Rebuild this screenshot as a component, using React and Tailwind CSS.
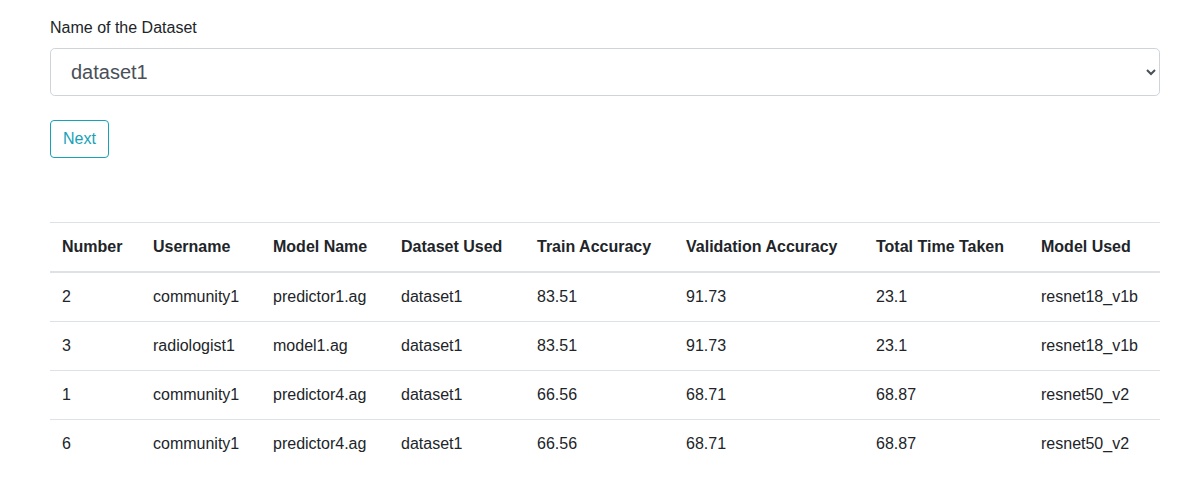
import { useState } from "react";

const rows = [
  { number: 2, username: "community1", modelName: "predictor1.ag", dataset: "dataset1", train: "83.51", valid: "91.73", time: "23.1", model: "resnet18_v1b" },
  { number: 3, username: "radiologist1", modelName: "model1.ag", dataset: "dataset1", train: "83.51", valid: "91.73", time: "23.1", model: "resnet18_v1b" },
  { number: 1, username: "community1", modelName: "predictor4.ag", dataset: "dataset1", train: "66.56", valid: "68.71", time: "68.87", model: "resnet50_v2" },
  { number: 6, username: "community1", modelName: "predictor4.ag", dataset: "dataset1", train: "66.56", valid: "68.71", time: "68.87", model: "resnet50_v2" },
];

const columns = [
  { label: "Number", key: "number", w: "w-[91px]" },
  { label: "Username", key: "username", w: "w-[120px]" },
  { label: "Model Name", key: "modelName", w: "w-[128px]" },
  { label: "Dataset Used", key: "dataset", w: "w-[136px]" },
  { label: "Train Accuracy", key: "train", w: "w-[149px]" },
  { label: "Validation Accuracy", key: "valid", w: "w-[190px]" },
  { label: "Total Time Taken", key: "time", w: "w-[165px]" },
  { label: "Model Used", key: "model", w: "w-[131px]" },
];

export default function App() {
  const [dataset, setDataset] = useState("dataset1");

  return (
    <div className="min-h-[490px] bg-white pl-[50px] pr-[32px] pt-[16px] text-[16px] leading-6 text-[#212529] font-['Liberation_Sans',Arial,sans-serif]">
      <div className="mb-4">
        <label className="mb-2 inline-block">Name of the Dataset</label>
        <select
          value={dataset}
          onChange={(e) => setDataset(e.target.value)}
          className="block h-[48px] w-full rounded-[4.8px] border border-[#ced4da] bg-white px-4 text-[20px] leading-normal text-[#495057] font-['Liberation_Sans',Arial,sans-serif]"
        >
          <option value="dataset1">dataset1</option>
          <option value="dataset2">dataset2</option>
        </select>
      </div>

      <button className="mt-2 h-[38px] rounded-[4px] border border-[#17a2b8] px-3 text-[16px] text-[#17a2b8] hover:bg-[#17a2b8] hover:text-white">
        Next
      </button>

      <table className="mt-[64px] w-full table-fixed border-collapse">
        <thead>
          <tr>
            {columns.map((c) => (
              <th
                key={c.key}
                className={`${c.w} border-t border-b-2 border-[#dee2e6] p-3 text-left align-bottom font-bold`}
              >
                {c.label}
              </th>
            ))}
          </tr>
        </thead>
        <tbody>
          {rows.map((r, i) => (
            <tr key={i}>
              {columns.map((c) => (
                <td key={c.key} className="border-t border-[#dee2e6] p-3 align-top">
                  {r[c.key]}
                </td>
              ))}
            </tr>
          ))}
        </tbody>
      </table>
    </div>
  );
}
